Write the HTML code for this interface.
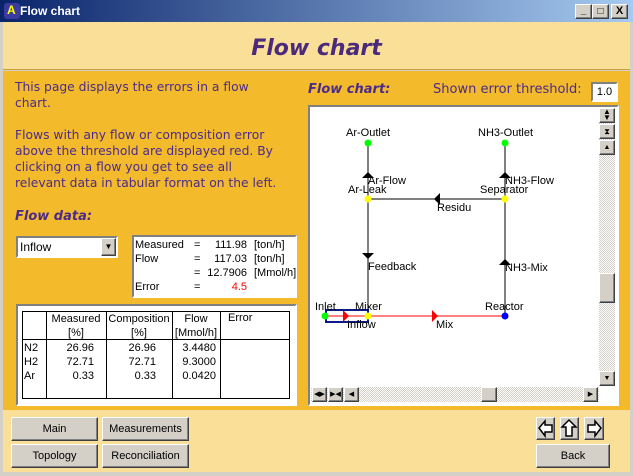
<!DOCTYPE html>
<html><head><meta charset="utf-8"><style>
*{margin:0;padding:0;box-sizing:border-box}
body{width:633px;height:476px;position:relative;background:#d4d0c8;font-family:"Liberation Sans",sans-serif;overflow:hidden}
.a{position:absolute}
.dj{font-family:"DejaVu Sans",sans-serif;color:#4b2a8c}
.btn{position:absolute;background:#d4d0c8;border:1px solid;border-color:#fff #404040 #404040 #fff;box-shadow:inset -1px -1px 0 #808080;font-size:11px;text-align:center;color:#000}
.sb{position:absolute;background:#d4d0c8;border:1px solid;border-color:#fff #404040 #404040 #fff;box-shadow:inset -1px -1px 0 #808080}
.t{position:absolute;font-size:11px;color:#000;white-space:nowrap}
</style></head><body>
<div class="a" style="left:0;top:0;width:633px;height:22px;background:linear-gradient(90deg,#0a246a,#a6caf0)"></div>
<div class="a" style="left:4px;top:3px;width:16px;height:16px;background:#3a3aa0;border-radius:3px"></div>
<div class="a" style="left:7px;top:3px;font-size:12px;color:#ff0;font-weight:bold">A</div>
<div class="a" style="left:20px;top:4px;color:#fff;font-weight:bold;font-size:12px">Flow chart</div>
<div class="btn" style="left:575px;top:4px;width:17px;height:15px;font-size:10px;line-height:12px;font-weight:bold">_</div>
<div class="btn" style="left:592px;top:4px;width:17px;height:15px;font-size:10px;line-height:13px">□</div>
<div class="btn" style="left:611px;top:4px;width:17px;height:15px;font-size:11px;line-height:13px;font-weight:bold">X</div>
<div class="a" style="left:3px;top:22px;width:627px;height:48px;background:#f9df98;border-bottom:1px solid #c8a040"></div>
<div class="a dj" style="left:0;top:36px;width:633px;text-align:center;font-size:22px;font-weight:bold;font-style:italic;color:#4b2a7c">Flow chart</div>
<div class="a" style="left:3px;top:71px;width:627px;height:339px;background:#f3ba2b"></div>
<div class="a dj" style="left:15px;top:79px;font-size:12.3px;line-height:16px;width:300px">This page displays the errors in a flow<br>chart.<br><br>Flows with any flow or composition error<br>above the threshold are displayed red. By<br>clicking on a flow you get to see all<br>relevant data in tabular format on the left.</div>
<div class="a dj" style="left:15px;top:209px;font-size:13px;font-weight:bold;font-style:italic">Flow data:</div>
<div class="a dj" style="left:308px;top:82px;font-size:13px;font-weight:bold;font-style:italic">Flow chart:</div>
<div class="a dj" style="left:433px;top:82px;font-size:13px">Shown error threshold:</div>
<div class="a" style="left:591px;top:82px;width:27px;height:20px;background:#fff;border:2px solid;border-color:#808080 #fff #fff #808080;font-size:11px;text-align:center;line-height:16px">1.0</div>
<div class="a" style="left:16px;top:236px;width:102px;height:22px;background:#fff;border:2px solid;border-color:#808080 #fff #fff #808080"></div>
<div class="t" style="left:20px;top:240px;font-size:12px">Inflow</div>
<div class="btn" style="left:101px;top:238px;width:15px;height:18px;font-size:8px;line-height:16px">▼</div>
<div class="a" style="left:132px;top:235px;width:165px;height:63px;background:#fff;border:2px solid;border-color:#808080 #fff #fff #808080"></div>
<div class="t" style="left:135px;top:238px;line-height:14px">Measured<br>Flow<br><br>Error</div>
<div class="t" style="left:194px;top:238px;line-height:14px">=<br>=<br>=<br>=</div>
<div class="t" style="left:205px;top:238px;line-height:14px;width:42px;text-align:right">111.98<br>117.03<br>12.7906<br><span style="color:#f00">4.5</span></div>
<div class="t" style="left:254px;top:238px;line-height:14px">[ton/h]<br>[ton/h]<br>[Mmol/h]</div>
<div class="a" style="left:16px;top:304px;width:281px;height:102px;background:#fff;border:2px solid;border-color:#808080 #fff #fff #808080"></div>
<svg class="a" style="left:0;top:0" width="633" height="476">
<g stroke="#000" stroke-width="1" fill="none">
<rect x="22.5" y="311.5" width="267" height="87"/>
<line x1="22" y1="339.5" x2="290" y2="339.5"/>
<line x1="46.5" y1="311" x2="46.5" y2="398"/>
<line x1="106.5" y1="311" x2="106.5" y2="398"/>
<line x1="172.5" y1="311" x2="172.5" y2="398"/>
<line x1="220.5" y1="311" x2="220.5" y2="398"/>
</g></svg>
<div class="t" style="left:46px;top:312px;width:60px;text-align:center;line-height:14px">Measured<br>[%]</div>
<div class="t" style="left:106px;top:312px;width:66px;text-align:center;line-height:14px">Composition<br>[%]</div>
<div class="t" style="left:172px;top:312px;width:48px;text-align:center;line-height:14px">Flow<br>[Mmol/h]</div>
<div class="t" style="left:228px;top:312px">Error</div>
<div class="t" style="left:24px;top:341px;line-height:14px">N2<br>H2<br>Ar</div>
<div class="t" style="left:50px;top:341px;width:44px;text-align:right;line-height:14px">26.96<br>72.71<br>0.33</div>
<div class="t" style="left:110px;top:341px;width:46px;text-align:right;line-height:14px">26.96<br>72.71<br>0.33</div>
<div class="t" style="left:172px;top:341px;width:44px;text-align:right;line-height:14px">3.4480<br>9.3000<br>0.0420</div>
<div class="a" style="left:308px;top:105px;width:311px;height:301px;background:#fff;border:2px solid;border-color:#808080 #fff #fff #808080"></div>
<div class="a" style="left:599px;top:108px;width:16px;height:276px;background:repeating-conic-gradient(#d4d0c8 0 25%,#fff 0 50%) 0 0/2px 2px"></div>
<div class="a" style="left:311px;top:387px;width:288px;height:15px;background:repeating-conic-gradient(#d4d0c8 0 25%,#fff 0 50%) 0 0/2px 2px"></div>
<div class="sb" style="left:599px;top:108px;width:16px;height:15px;font-size:8px;text-align:center;line-height:6px">▲<br>▼</div>
<div class="sb" style="left:599px;top:124px;width:16px;height:15px;font-size:8px;text-align:center;line-height:13px">⧗</div>
<div class="sb" style="left:599px;top:140px;width:16px;height:15px;font-size:7px;text-align:center;line-height:13px">▲</div>
<div class="sb" style="left:599px;top:273px;width:16px;height:30px"></div>
<div class="sb" style="left:599px;top:371px;width:16px;height:15px;font-size:7px;text-align:center;line-height:13px">▼</div>
<div class="sb" style="left:312px;top:387px;width:15px;height:15px;font-size:7px;text-align:center;line-height:13px">◀▶</div>
<div class="sb" style="left:328px;top:387px;width:15px;height:15px;font-size:7px;text-align:center;line-height:13px">▶◀</div>
<div class="sb" style="left:344px;top:387px;width:15px;height:15px;font-size:7px;text-align:center;line-height:13px">◀</div>
<div class="sb" style="left:481px;top:387px;width:16px;height:15px"></div>
<div class="sb" style="left:583px;top:387px;width:15px;height:15px;font-size:7px;text-align:center;line-height:13px">▶</div>
<svg class="a" style="left:0;top:0" width="633" height="476">
<g stroke="#000" stroke-width="1">
<line x1="368" y1="143" x2="368" y2="316"/>
<line x1="505" y1="143" x2="505" y2="316"/>
<line x1="368" y1="199" x2="505" y2="199"/>
</g>
<line x1="325" y1="316" x2="505" y2="316" stroke="#f00"/>
<g fill="#000">
<polygon points="362,178 374,178 368,172"/>
<polygon points="499,178 511,178 505,172"/>
<polygon points="362,253 374,253 368,259"/>
<polygon points="499,265 511,265 505,259"/>
<polygon points="440,193 440,205 434,199"/>
</g>
<g fill="#f00">
<polygon points="343,310 343,322 349,316"/>
<polygon points="432,310 432,322 438,316"/>
</g>
<rect x="326" y="310" width="42" height="12" fill="none" stroke="#0a1a8a" stroke-width="2"/>
<circle cx="368" cy="143" r="3.5" fill="#0f0"/>
<circle cx="505" cy="143" r="3.5" fill="#0f0"/>
<circle cx="368" cy="199" r="3.5" fill="#ff0"/>
<circle cx="505" cy="199" r="3.5" fill="#ff0"/>
<circle cx="368" cy="316" r="3.5" fill="#ff0"/>
<circle cx="325" cy="316" r="3.5" fill="#0f0"/>
<circle cx="505" cy="316" r="3.5" fill="#00f"/>
</svg>
<div class="t" style="left:346px;top:127px">Ar-Outlet</div>
<div class="t" style="left:478px;top:127px">NH3-Outlet</div>
<div class="t" style="left:368px;top:175px">Ar-Flow</div>
<div class="t" style="left:505px;top:175px">NH3-Flow</div>
<div class="t" style="left:348px;top:184px">Ar-Leak</div>
<div class="t" style="left:480px;top:184px">Separator</div>
<div class="t" style="left:437px;top:202px">Residu</div>
<div class="t" style="left:368px;top:261px">Feedback</div>
<div class="t" style="left:505px;top:262px">NH3-Mix</div>
<div class="t" style="left:315px;top:301px">Inlet</div>
<div class="t" style="left:355px;top:301px">Mixer</div>
<div class="t" style="left:485px;top:301px">Reactor</div>
<div class="t" style="left:347px;top:319px">Inflow</div>
<div class="t" style="left:436px;top:319px">Mix</div>
<div class="a" style="left:3px;top:410px;width:627px;height:62px;background:#f9df98"></div>
<div class="btn" style="left:11px;top:417px;width:87px;height:24px;line-height:22px">Main</div>
<div class="btn" style="left:102px;top:417px;width:87px;height:24px;line-height:22px">Measurements</div>
<div class="btn" style="left:11px;top:444px;width:87px;height:24px;line-height:22px">Topology</div>
<div class="btn" style="left:102px;top:444px;width:87px;height:24px;line-height:22px">Reconciliation</div>
<div class="btn" style="left:536px;top:444px;width:74px;height:24px;line-height:22px">Back</div>
<div class="btn" style="left:536px;top:417px;width:19px;height:23px"></div>
<div class="btn" style="left:560px;top:417px;width:19px;height:23px"></div>
<div class="btn" style="left:584px;top:417px;width:20px;height:23px"></div>
<svg class="a" style="left:0;top:0" width="633" height="476">
<g fill="#fff" stroke="#000" stroke-width="1.5">
<polygon points="539,428 545,421 545,425 552,425 552,432 545,432 545,436"/>
<polygon points="569,420 576,427 572,427 572,436 566,436 566,427 562,427"/>
<polygon points="601,428 595,421 595,425 588,425 588,432 595,432 595,436"/>
</g></svg>
</body></html>
